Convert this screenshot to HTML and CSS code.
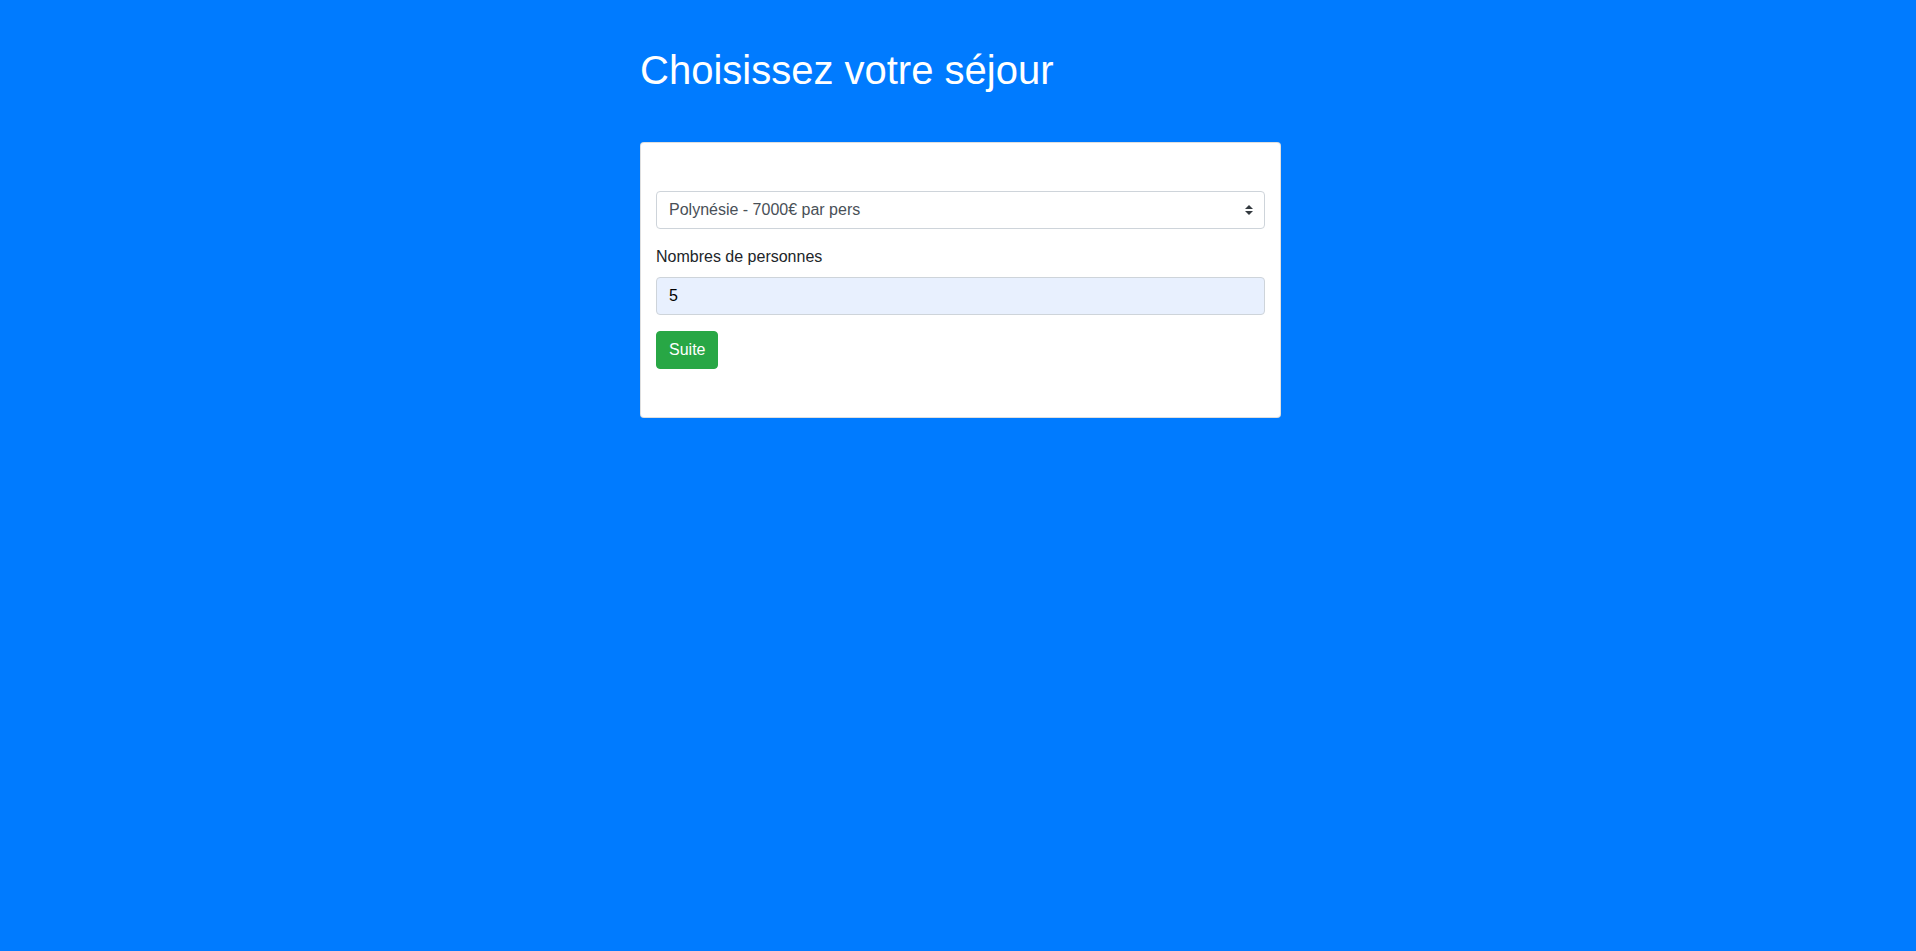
FILE: index.html
```html
<!DOCTYPE html>
<html lang="fr">
<head>
<meta charset="utf-8">
<title>Choisissez votre séjour</title>
<link rel="stylesheet" href="styles.css">
</head>
<body>
<main class="wrap">
  <h1 class="title">Choisissez votre séjour</h1>
  <div class="card">
    <form class="form">
      <div class="select-box">
        <select class="control select">
          <option>Polynésie - 7000€ par pers</option>
        </select>
        <svg class="arrows" width="8" height="10" viewBox="0 0 8 10"><path d="M4 0L8 4H0Z M4 10L0 6H8Z" fill="#343a40"/></svg>
      </div>
      <div class="group">
        <label class="label">Nombres de personnes</label>
        <input class="control input" type="text" value="5">
      </div>
      <button type="button" class="btn">Suite</button>
    </form>
  </div>
</main>
</body>
</html>
```
FILE: styles.css
```css
html, body {
  margin: 0;
  padding: 0;
}
body {
  background: #007bff;
  font-family: "Liberation Sans", Arial, sans-serif;
  font-size: 16px;
  line-height: 1.5;
  color: #212529;
  min-height: 951px;
}
.wrap {
  width: 641px;
  margin-left: 640px;
  padding-top: 46px;
}
.title {
  margin: 0 0 48px 0;
  font-size: 40px;
  font-weight: 400;
  line-height: 48px;
  color: #fff;
}
.card {
  background: #fff;
  border: 1px solid rgba(0,0,0,.125);
  border-radius: 4px;
  padding: 15px;
}
.form {
  padding: 33px 0;
  display: flex;
  flex-direction: column;
  align-items: flex-start;
}
.select-box {
  position: relative;
  width: 100%;
  margin-bottom: 16px;
}
.control {
  display: block;
  box-sizing: border-box;
  width: 100%;
  height: 38px;
  padding: 6px 12px;
  font-family: inherit;
  font-size: 16px;
  line-height: 24px;
  border: 1px solid #ced4da;
  border-radius: 4px;
  margin: 0;
}
.select {
  -webkit-appearance: none;
  appearance: none;
  background: #fff;
  color: #495057;
  padding-left: 12px;
}
.arrows {
  position: absolute;
  right: 12px;
  top: 14px;
}
.group {
  width: 100%;
  margin-bottom: 16px;
}
.label {
  display: block;
  margin-bottom: 8px;
  color: #212529;
}
.input {
  background: #e8f0fe;
  color: #000;
}
.btn {
  font-family: inherit;
  font-size: 16px;
  line-height: 24px;
  padding: 6px 12px;
  height: 38px;
  color: #fff;
  background: #28a745;
  border: 1px solid #28a745;
  border-radius: 4px;
}
```
